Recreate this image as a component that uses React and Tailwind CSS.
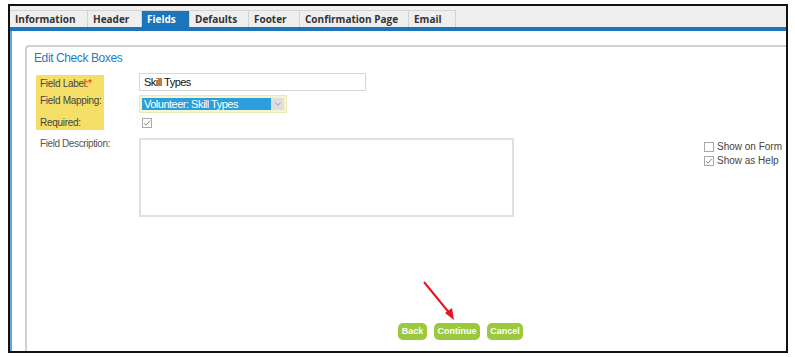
import { ChevronDown } from 'lucide-react';

const tabs = [
  { label: 'Information', w: 'w-[78px]' },
  { label: 'Header', w: 'w-[54px]' },
  { label: 'Fields', w: 'w-[48px]', active: true },
  { label: 'Defaults', w: 'w-[59px]' },
  { label: 'Footer', w: 'w-[51px]' },
  { label: 'Confirmation Page', w: 'w-[109px]' },
  { label: 'Email', w: 'w-[47px]' },
];

function Check({ checked }) {
  return (
    <span className="w-[10px] h-[10px] shrink-0 border border-[#a8a8a8] bg-white flex items-center justify-center">
      {checked && (
        <svg width="8" height="8" viewBox="0 0 8 8" fill="none">
          <path d="M1 4.2 L3 6.2 L7 1.6" stroke="#8a8a8a" strokeWidth="1" />
        </svg>
      )}
    </span>
  );
}

function GreenButton({ children, w }) {
  return (
    <button className={`${w} h-[17px] rounded-[5px] bg-[#9bc83c] text-white text-[9px] font-bold leading-none flex items-center justify-center`}>
      {children}
    </button>
  );
}

export default function App() {
  return (
    <div className="relative w-[795px] h-[357px] bg-white pt-[4px] pl-[8px] font-['Liberation_Sans',Arial,sans-serif]">
      <div className="w-[780px] h-[349px] border-2 border-[#111] flex flex-col overflow-hidden">
        <div className="h-[21px] bg-[#efefef] flex items-end shrink-0">
          {tabs.map(t => (
            <div
              key={t.label}
              className={`${t.w} h-[17px] pl-[5px] flex items-center whitespace-nowrap text-[10px] font-bold font-['Open_Sans',sans-serif] border-t border-r border-[#d4d4d4] ${
                t.active ? 'bg-[#1b75bc] text-white border-[#1b75bc]' : 'bg-[#efefef] text-[#333]'
              }`}
            >
              {t.label}
            </div>
          ))}
        </div>
        <div className="h-[4px] bg-[#1b75bc] shrink-0" />
        <div className="flex-1 border-l-2 border-[#5ea8df] pl-[13px] pt-[14px] flex">
          <div className="flex-1 border-l-2 border-t-2 border-[#d2d2d2] rounded-tl-[4px] flex flex-col">
            <div className="pl-[7px] pt-[3px] text-[12px] leading-[16px] tracking-[-0.4px] text-[#2b7bbf]">Edit Check Boxes</div>

            <div className="flex mt-[7px]">
              <div className="ml-[9px] mt-[2px] w-[68px] h-[55px] bg-[#f5df67] pl-[4px] pt-[2px] text-[10px] leading-[13px] tracking-[-0.3px] whitespace-nowrap text-[#444]">
                <div>Field Label:<span className="text-[#e01b1b]">*</span></div>
                <div className="mt-[4px]">Field Mapping:</div>
                <div className="mt-[9px]">Required:</div>
              </div>
              <div className="ml-[35px] flex flex-col">
                <div className="w-[227px] h-[18px] border border-[#d6d6d6] pl-[4px] flex items-center text-[11px] tracking-[-0.5px] text-[#111]">
                  Skill Types
                </div>
                <div className="mt-[4px] w-[148px] h-[18px] bg-[#f6f5cf] border border-[#e9e8b8] p-[2px] flex">
                  <div className="flex-1 bg-[#2b9fdc] text-white text-[11px] tracking-[-0.5px] leading-[12px] pl-[2px] flex items-center whitespace-nowrap">
                    Volunteer: Skill Types
                  </div>
                  <div className="w-[13px] bg-[#dedede] flex items-center justify-center">
                    <ChevronDown className="w-[10px] h-[10px] text-[#777]" strokeWidth={1.5} />
                  </div>
                </div>
                <div className="mt-[5px] ml-[3px]">
                  <Check checked />
                </div>
              </div>
            </div>

            <div className="flex mt-[8px]">
              <div className="ml-[13px] w-[99px] text-[10px] leading-[12px] tracking-[-0.4px] whitespace-nowrap text-[#555]">Field Description:</div>
              <div className="w-[375px] h-[79px] border-2 border-[#e0e0e0] bg-white" />
              <div className="ml-auto mr-[4px] mt-[4px] flex flex-col gap-[4px] text-[10px] leading-[10px] text-[#444] whitespace-nowrap">
                <div className="flex items-center gap-[3px]">
                  <Check />
                  <span>Show on Form</span>
                </div>
                <div className="flex items-center gap-[3px]">
                  <Check checked />
                  <span>Show as Help</span>
                </div>
              </div>
            </div>

            <div className="mt-auto mb-[11px] ml-[371px] flex gap-[7px]">
              <GreenButton w="w-[29px]">Back</GreenButton>
              <GreenButton w="w-[46px]">Continue</GreenButton>
              <GreenButton w="w-[36px]">Cancel</GreenButton>
            </div>
          </div>
        </div>
      </div>

      <svg className="absolute left-0 top-0 pointer-events-none" width="795" height="357">
        <line x1="424" y1="282" x2="451" y2="315" stroke="#e8141c" strokeWidth="2" />
        <polygon points="454,320 445,313 452,308" fill="#e8141c" />
      </svg>
    </div>
  );
}
